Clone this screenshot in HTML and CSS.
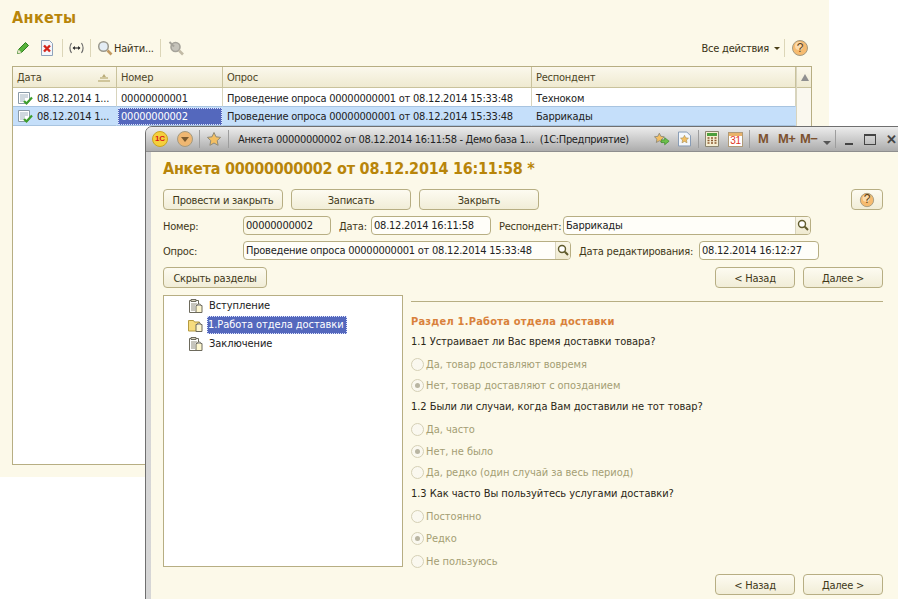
FILE: index.html
```html
<!DOCTYPE html>
<html lang="ru">
<head>
<meta charset="utf-8">
<title>Анкеты</title>
<link rel="stylesheet" href="styles.css">
</head>
<body>
<svg class="defs" width="0" height="0">
  <symbol id="doc" viewBox="0 0 16 16">
    <path d="M1.500 2.500h11v8l-2 3h-9z" fill="#fff" stroke="#8a9aa8"/>
    <path d="M3 5h8M3 7h8M3 9h5M3 11h4" stroke="#9fb0bd"/>
    <path d="M7 11l2.500 2.500L15 7.500" fill="none" stroke="#3d9e2c" stroke-width="2.200"/>
  </symbol>
  <symbol id="clip" viewBox="0 0 16 16">
    <path d="M1.500 2.500h9v12h-9z" fill="#fff" stroke="#6d6a5c"/>
    <path d="M3 1.500h5v2H3z" fill="#d8d4c0" stroke="#6d6a5c"/>
    <path d="M3 6h6M3 8h4M3 10h4M3 12h4" stroke="#8d8a7a"/>
    <path d="M8 7.500h6v7H8z" fill="#fdf6cf" stroke="#6d6a5c"/>
    <path d="M9 7.500a2 1.500 0 0 1 4 0" fill="#fff" stroke="#6d6a5c"/>
  </symbol>
  <symbol id="folder" viewBox="0 0 16 16">
    <path d="M.5 3.500h5l1 1.500h5v9H.5z" fill="#f6dc7e" stroke="#b59a3f"/>
    <path d="M8 7.500h6v7H8z" fill="#fdf6cf" stroke="#6d6a5c"/>
    <path d="M9 7.500a2 1.500 0 0 1 4 0" fill="#fff" stroke="#6d6a5c"/>
  </symbol>
  <symbol id="lens" viewBox="0 0 16 16">
    <circle cx="6.500" cy="6.500" r="4.800" fill="#e4edf5" stroke="#9a988c" stroke-width="1.500"/>
    <path d="M10.500 10.500l4 4" stroke="#c29a62" stroke-width="2.600"/>
  </symbol>
  <symbol id="picklens" viewBox="0 0 12 12">
    <circle cx="5" cy="5" r="3.500" fill="#fff" stroke="#5f5a2c" stroke-width="1.400"/>
    <path d="M7.800 7.800L11 11" stroke="#5f5a2c" stroke-width="2"/>
  </symbol>
  <symbol id="star" viewBox="0 0 16 16">
    <path d="M8 1.500l2 4.300 4.600.6-3.400 3.200.9 4.700L8 12l-4.100 2.300.9-4.700L1.400 6.400 6 5.800z" fill="#f4bf62" stroke="#8f8a78"/>
  </symbol>
  <symbol id="help" viewBox="0 0 18 18">
    <circle cx="9" cy="9" r="7.500" fill="#f6bb70" stroke="#a39a80"/>
    <circle cx="8" cy="7" r="4" fill="#fbdcae"/>
  </symbol>
</svg>

<section class="panel">
  <h1 class="title">Анкеты</h1>
  <div class="toolbar">
    <svg class="tool pencil" viewBox="0 0 14 14"><path d="M1.500 12.500l1-4L9.500 1.500l3 3-7 7z" fill="#58b33a" stroke="#2f7d22"/><path d="M1.500 12.500l1-4 3 3z" fill="#e9e4c8"/></svg>
    <svg class="tool del" viewBox="0 0 14 16"><path d="M1.500 .5h8l3 3v12h-11z" fill="#f4f7fb" stroke="#8fa3bb"/><path d="M4 5.500l6 6M10 5.500l-6 6" stroke="#d4261c" stroke-width="2.400"/></svg>
    <span class="sep"></span>
    <svg class="tool arrows" viewBox="0 0 15 12"><path d="M2.500 1C.6 4 .6 8 2.500 11M12.500 1c1.900 3 1.900 7 0 10" fill="none" stroke="#666" stroke-width="1.100"/><path d="M4 6h7" stroke="#333" stroke-width="1.200"/><path d="M3.500 6l2.500-2v4zM11.500 6L9 4v4z" fill="#333"/></svg>
    <span class="sep"></span>
    <svg class="tool lens"><use href="#lens"/></svg>
    <span class="find">Найти...</span>
    <span class="sep"></span>
    <svg class="tool lens off" viewBox="0 0 16 16"><circle cx="7.500" cy="7" r="4.500" fill="#c6c4bb" stroke="#a5a39a" stroke-width="1.600"/><path d="M11 10.500l4 4" stroke="#c2bba6" stroke-width="2.600"/><path d="M1.500 2l4.500 4.500" stroke="#a5a39a" stroke-width="2"/></svg>
    <span class="spacer"></span>
    <span class="allact">Все действия</span>
    <span class="caret"></span>
    <span class="sep wide"></span>
    <span class="helpwrap"><svg class="helpicon"><use href="#help"/></svg><span class="q">?</span></span>
  </div>
  <div class="grid">
    <div class="table">
      <div class="hcell c1">Дата<svg class="sort" viewBox="0 0 12 8"><path d="M6 0l2 3H4z" fill="#b9ac78"/><path d="M2 4h8M0 7h12" stroke="#c3b886" stroke-width="1.500"/></svg></div>
      <div class="hcell c2">Номер</div>
      <div class="hcell c3">Опрос</div>
      <div class="hcell c4">Респондент</div>
      <div class="cell row1"><svg class="rowicon"><use href="#doc"/></svg>08.12.2014 1...</div>
      <div class="cell row1">00000000001</div>
      <div class="cell row1">Проведение опроса 00000000001 от 08.12.2014 15:33:48</div>
      <div class="cell row1">Техноком</div>
      <div class="cell sel"><svg class="rowicon"><use href="#doc"/></svg>08.12.2014 1...</div>
      <div class="cell sel"><span class="current">00000000002</span></div>
      <div class="cell sel">Проведение опроса 00000000001 от 08.12.2014 15:33:48</div>
      <div class="cell sel">Баррикады</div>
    </div>
    <div class="scroll"><div class="scrollup"></div></div>
  </div>
</section>

<section class="window">
  <header class="titlebar">
    <span class="logo">1С</span>
    <span class="roundbtn"><span class="rcaret"></span></span>
    <span class="tsep"></span>
    <svg class="tstar"><use href="#star"/></svg>
    <span class="tsep"></span>
    <span class="wintitle">Анкета 00000000002 от 08.12.2014 16:11:58 - Демо база 1...  (1С:Предприятие)</span>
    <span class="spacer"></span>
    <svg class="ti star2" viewBox="0 0 18 16"><path d="M6 1.500l1.700 3.500 3.800.5-2.800 2.700.7 3.800L6 10l-3.400 2 .7-3.800L.5 5.500 4.300 5z" fill="#f4bf62" stroke="#8f8a78"/><path d="M8 9h4V6.500l5 4-5 4V12H8z" fill="#6cc04a" stroke="#3b8a2a" stroke-width=".8"/></svg>
    <svg class="ti narrow" viewBox="0 0 14 16"><path d="M.5.500h9l4 4v11H.5z" fill="#f4f7fb" stroke="#7d94b0"/><path d="M7 4l1.300 2.700 3 .4-2.200 2 .6 3L7 10.600l-2.700 1.500.6-3-2.200-2 3-.4z" fill="#f4bf62" stroke="#a08a50" stroke-width=".6"/></svg>
    <span class="tsep s1"></span>
    <svg class="ti calc" viewBox="0 0 14 16"><path d="M.5.500h13v15H.5z" fill="#f5edd2" stroke="#8a8570"/><path d="M2 2h10v3H2z" fill="#4c9f3d"/><path d="M2.500 7h2M6 7h2M9.500 7h2M2.500 9.500h2M6 9.500h2M9.500 9.500h2M2.500 12h2M6 12h2M9.500 12h2" stroke="#8a5a30" stroke-width="1.500"/></svg>
    <span class="cal"><span class="calnum">31</span></span>
    <span class="tsep s2"></span>
    <span class="mem m1">M</span>
    <span class="mem m2">M+</span>
    <span class="mem m3">M−</span>
    <span class="tcaret"></span>
    <span class="tsep s3"></span>
    <span class="wbtn min"></span>
    <span class="wbtn max"></span>
    <span class="wbtn close">✕</span>
  </header>

  <div class="body">
    <h2 class="doctitle">Анкета 00000000002 от 08.12.2014 16:11:58 *</h2>
    <div class="btnrow">
      <button class="btn w120">Провести и закрыть</button>
      <button class="btn w120">Записать</button>
      <button class="btn w120">Закрыть</button>
      <span class="spacer"></span>
      <button class="btn w32"><svg class="helpicon small"><use href="#help"/></svg><span class="q qs">?</span></button>
    </div>
    <div class="fieldrow r1">
      <label class="lbl l80">Номер:</label>
      <span class="inp w88 num">00000000002</span>
      <label class="lbl l32">Дата:</label>
      <span class="inp w120">08.12.2014 16:11:58</span>
      <label class="lbl l64">Респондент:</label>
      <span class="inp w248">Баррикады<span class="pick"><svg class="picklens"><use href="#picklens"/></svg></span></span>
    </div>
    <div class="fieldrow r2">
      <label class="lbl l80">Опрос:</label>
      <span class="inp w328">Проведение опроса 00000000001 от 08.12.2014 15:33:48<span class="pick"><svg class="picklens"><use href="#picklens"/></svg></span></span>
      <label class="lbl l120">Дата редактирования:</label>
      <span class="inp w120">08.12.2014 16:12:27</span>
    </div>
    <div class="btnrow r3">
      <button class="btn w104">Скрыть разделы</button>
      <span class="spacer"></span>
      <button class="btn w80">&lt; Назад</button>
      <button class="btn w80">Далее &gt;</button>
    </div>
    <div class="main">
      <div class="tree">
        <div class="node"><svg class="nodeicon"><use href="#clip"/></svg><span class="nodetext">Вступление</span></div>
        <div class="node"><svg class="nodeicon"><use href="#folder"/></svg><span class="nodetext active">1.Работа отдела доставки</span></div>
        <div class="node"><svg class="nodeicon"><use href="#clip"/></svg><span class="nodetext">Заключение</span></div>
      </div>
      <div class="survey">
        <div class="rule"></div>
        <div class="section">Раздел 1.Работа отдела доставки</div>
        <div class="q-row">1.1 Устраивает ли Вас время доставки товара?</div>
        <div class="r-row first"><span class="radio"></span>Да, товар доставляют вовремя</div>
        <div class="r-row"><span class="radio on"></span>Нет, товар доставляют с опозданием</div>
        <div class="q-row">1.2 Были ли случаи, когда Вам доставили не тот товар?</div>
        <div class="r-row first"><span class="radio"></span>Да, часто</div>
        <div class="r-row gap"><span class="radio on"></span>Нет, не было</div>
        <div class="r-row"><span class="radio"></span>Да, редко (один случай за весь период)</div>
        <div class="q-row">1.3 Как часто Вы пользуйтесь услугами доставки?</div>
        <div class="r-row first"><span class="radio"></span>Постоянно</div>
        <div class="r-row gap"><span class="radio on"></span>Редко</div>
        <div class="r-row first"><span class="radio"></span>Не пользуюсь</div>
      </div>
    </div>
    <div class="btnrow r4">
      <span class="spacer"></span>
      <button class="btn w80">&lt; Назад</button>
      <button class="btn w80">Далее &gt;</button>
    </div>
  </div>
</section>
</body>
</html>
```

FILE: styles.css
```css
* { box-sizing: border-box; }
html, body { margin: 0; height: 100%; }
body {
  position: relative;
  width: 898px;
  height: 599px;
  overflow: hidden;
  background: #fff;
  font: 11px/1 "DejaVu Sans", Verdana, sans-serif;
  font-stretch: condensed;
  letter-spacing: -.23px;
  color: #2b2716;
}
.defs { position: absolute; }
.spacer { flex: 1; }

/* Back panel */
.panel {
  width: 829px;
  height: 477px;
  padding: 0 17px 12px 12px;
  background: #fcf9e9;
  display: flex;
  flex-direction: column;
}
.title {
  margin: 8px 0 0;
  font: bold 16px/19px "DejaVu Sans", Verdana, sans-serif;
  font-stretch: condensed;
  letter-spacing: .4px;
  color: #b8850a;
  height: 19px;
}
.toolbar {
  margin-top: 10px;
  height: 22px;
  display: flex;
  align-items: center;
  color: #3a3215;
}
.tool { flex: none; display: block; }
.pencil { width: 14px; height: 14px; margin-left: 4px; }
.del { width: 14px; height: 16px; margin-left: 10px; }
.sep { width: 1px; height: 18px; background: #dcd6b8; margin: 0 6px; flex: none; }
.toolbar .del + .sep { margin-left: 8px; }
.arrows { width: 15px; height: 12px; }
.lens { width: 16px; height: 16px; }
.find { margin-left: 1px; }
.off { margin-left: 1px; }
.allact { color: #3a3215; }
.caret {
  margin-left: 5px;
  border: 3px solid transparent;
  border-top: 3px solid #4a3f18;
  border-bottom: 0;
}
.wide { margin: 0 6px 0 4px; }
.helpwrap { position: relative; width: 18px; height: 18px; margin-right: 3px; flex: none; }
.helpicon { width: 18px; height: 18px; display: block; }
.q {
  position: absolute;
  inset: 0;
  text-align: center;
  font: 12px/18px "Liberation Sans", sans-serif;
  color: #5c3b12;
}

.grid {
  margin-top: 7px;
  flex: 1;
  border: 1px solid #b7ae83;
  background: #fff;
  display: flex;
}
.table {
  flex: none;
  width: 783px;
  display: grid;
  grid-template-columns: 104px 106px 309px 264px;
  grid-template-rows: 21px 18px 20px;
  align-content: start;
}
.hcell {
  background: linear-gradient(#fbf8ec, #efead1);
  border-right: 1px solid #c9c29c;
  border-bottom: 1px solid #c9c29c;
  padding-left: 4px;
  display: flex;
  align-items: center;
  color: #4d4526;
  position: relative;
}
.sort { width: 12px; height: 8px; position: absolute; right: 6px; top: 7px; }
.cell {
  display: flex;
  align-items: center;
  padding-left: 4px;
  border-right: 1px solid #d8d4bd;
  white-space: nowrap;
  overflow: hidden;
  color: #222;
}
.row1 { padding-top: 2px; }
.cell.sel { background: #c5dffa; border-top: 1px solid #a8c4e0; border-bottom: 1px solid #a8c4e0; border-right-color: #c5dffa; }
.rowicon { width: 16px; height: 16px; margin-right: 4px; flex: none; }
.current {
  display: block;
  margin-left: -3px;
  width: 104px;
  height: 17px;
  line-height: 15px;
  padding-left: 2px;
  background: #5468bd;
  color: #fff;
  border: 1px dotted #dfe5ff;
}
.scroll { flex: 1; background: #faf8ef; border-left: 1px solid #d8d4bd; }
.scrollup {
  height: 21px;
  background: linear-gradient(#fbf8ec, #efead1);
  border-bottom: 1px solid #c9c29c;
  position: relative;
}
.scrollup::after {
  content: "";
  position: absolute;
  left: 4px;
  top: 7px;
  border: 4px solid transparent;
  border-bottom: 7px solid #8f8f8f;
  border-top: 0;
}

/* Overlapping window */
.window {
  position: absolute;
  left: 145px;
  top: 126px;
  width: 760px;
  height: 480px;
  border: 1px solid #6f6f6f;
  border-radius: 7px 7px 0 0;
  background: linear-gradient(90deg, #d6d6d6, #bdbdbd);
  padding: 0 5px;
}
.titlebar {
  height: 25px;
  margin: 0 -5px;
  padding-left: 6px;
  padding-right: 7px;
  border-radius: 6px 6px 0 0;
  background: linear-gradient(#ececec, #c9c9c9 55%, #acacac);
  border-bottom: 1px solid #8e8e8e;
  display: flex;
  align-items: center;
  color: #222;
}
.logo {
  width: 16px;
  height: 16px;
  border-radius: 50%;
  background: #f5cf3c;
  border: 1px solid #c9a520;
  color: #d8151b;
  font: bold 8px/14px "Liberation Sans", sans-serif;
  text-align: center;
  flex: none;
}
.roundbtn {
  margin-left: 9px;
  width: 16px;
  height: 16px;
  border-radius: 50%;
  background: #efb772;
  border: 1px solid #a39a80;
  flex: none;
  display: flex;
  align-items: center;
  justify-content: center;
}
.rcaret { border: 4px solid transparent; border-top: 5px solid #7a5a30; border-bottom: 0; }
.tsep { width: 1px; height: 18px; background: #9d9d9d; margin: 0 6px; flex: none; }
.tstar { width: 16px; height: 16px; flex: none; }
.wintitle { margin-left: 3px; white-space: pre; letter-spacing: -.32px; }
.ti { flex: none; display: block; height: 16px; }
.star2 { width: 16px; }
.narrow { width: 13px; margin-left: 8px; }
.s1 { margin: 0 0 0 7px; }
.calc { width: 14px; margin-left: 6px; }
.cal {
  width: 15px;
  height: 15px;
  margin-left: 9px;
  background: linear-gradient(#e9b26a 3px, #fff 3px);
  border: 1px solid #b09a78;
  flex: none;
  display: block;
  text-align: center;
}
.calnum { font: 10px/11px "Liberation Sans", sans-serif; color: #e2341e; display: block; padding-top: 2px; }
.s2 { margin: 0 0 0 6px; }
.mem {
  font: bold 13px/16px "Liberation Sans", sans-serif;
  color: #7c5230;
  white-space: nowrap;
  flex: none;
}
.m1 { width: 11px; margin-left: 8px; }
.m2 { width: 16px; margin-left: 9px; letter-spacing: -.5px; }
.m3 { width: 16px; margin-left: 6px; letter-spacing: -.5px; }
.tcaret { margin: 7px 0 0 7px; border: 4px solid transparent; border-top: 4px solid #555; border-bottom: 0; flex: none; }
.s3 { margin: 0 0 0 4px; }
.wbtn { flex: none; display: block; }
.min { width: 8px; height: 2px; background: #444; margin: 9px 0 0 9px; }
.max { width: 12px; height: 11px; border: 1px solid #444; border-top-width: 2px; margin-left: 11px; }
.close { width: 12px; margin-left: 9px; font: bold 13px/13px "Liberation Sans", sans-serif; color: #444; text-align: center; }

.body {
  height: 454px;
  background: #fcf9e9;
  padding: 0 14px 0 12px;
  width: 749px;
  overflow: hidden;
}
.doctitle {
  margin: 7px 0 0;
  height: 20px;
  font: bold 16px/20px "DejaVu Sans", Verdana, sans-serif;
  font-stretch: condensed;
  letter-spacing: -.25px;
  color: #b8850a;
  white-space: nowrap;
}
.btnrow { display: flex; gap: 8px; align-items: center; margin-top: 10px; height: 21px; width: 720px; }
.btn {
  height: 21px;
  padding: 1px 0 0;
  border: 1px solid #b7ae83;
  border-radius: 4px;
  background: linear-gradient(#fdfbf1, #f1edd7);
  font: inherit;
  font-stretch: condensed;
  letter-spacing: -.23px;
  color: #3f3818;
  position: relative;
  flex: none;
}
.w120 { width: 120px; }
.w104 { width: 104px; }
.w80 { width: 80px; }
.w32 { width: 32px; }
.small { width: 16px; height: 16px; margin: 0 auto; }
.qs { line-height: 18px; }
.fieldrow { display: flex; align-items: center; height: 19px; width: 720px; }
.r1 { margin-top: 6px; }
.r2 { margin-top: 6px; }
.r3 { margin-top: 7px; }
.r4 { margin-top: 7px; }
.lbl { flex: none; color: #3f3818; white-space: nowrap; padding-top: 1px; }
.l80 { width: 80px; }
.l32 { width: 32px; margin-left: 8px; }
.l64 { width: 64px; margin-left: 8px; }
.l120 { width: 120px; margin-left: 8px; }
.inp {
  flex: none;
  height: 19px;
  border: 1px solid #b7ae83;
  border-radius: 4px;
  background: #fffef9;
  padding-left: 2px;
  line-height: 18px;
  white-space: nowrap;
  position: relative;
  color: #222;
}
.num { background: #fcf9e9; }
.w88 { width: 88px; }
.inp.w120 { width: 120px; }
.w248 { width: 248px; }
.w328 { width: 328px; }
.pick {
  position: absolute;
  top: 0;
  right: 0;
  width: 15px;
  height: 17px;
  background: linear-gradient(#faf7e8, #efead1);
  border-left: 1px solid #d8d4bd;
  border-radius: 0 3px 3px 0;
}
.picklens { width: 12px; height: 12px; position: absolute; left: 1px; top: 2px; display: block; }

.main { display: flex; gap: 8px; margin-top: 7px; height: 272px; width: 720px; }
.tree {
  width: 240px;
  flex: none;
  background: #fff;
  border: 1px solid #b7ae83;
  letter-spacing: -.07px;
}
.node { height: 19px; display: flex; align-items: center; padding-left: 24px; color: #222; }
.nodeicon { width: 16px; height: 16px; flex: none; margin-right: 4px; }
.nodetext { height: 18px; line-height: 18px; padding: 0 1px; white-space: nowrap; }
.active {
  background: #5468bd;
  color: #fff;
  outline: 1px dotted #dfe5ff;
  outline-offset: -1px;
  margin-left: -1px;
  padding-right: 3px;
}
.survey { flex: 1; min-width: 0; letter-spacing: -.05px; }
.rule { height: 1px; background: #b7ae83; margin-top: 6px; }
.section { margin-top: 9px; height: 21px; line-height: 22px; font-weight: bold; letter-spacing: .22px; color: #d9813b; }
.q-row { height: 20px; line-height: 20px; color: #2b2716; white-space: nowrap; }
.r-row + .q-row { margin-top: 1px; }
.r-row {
  height: 21px;
  display: flex;
  align-items: center;
  color: #a49e74;
  white-space: nowrap;
}
.first { margin-top: 2px; }
.gap { height: 22px; }
.radio {
  width: 13px;
  height: 13px;
  margin-right: 2px;
  border-radius: 50%;
  border: 1px solid #d5d0b5;
  background: #faf8ef;
  flex: none;
  position: relative;
}
.radio.on::after {
  content: "";
  position: absolute;
  inset: 3px;
  border-radius: 50%;
  background: #b9b5a2;
}
```
